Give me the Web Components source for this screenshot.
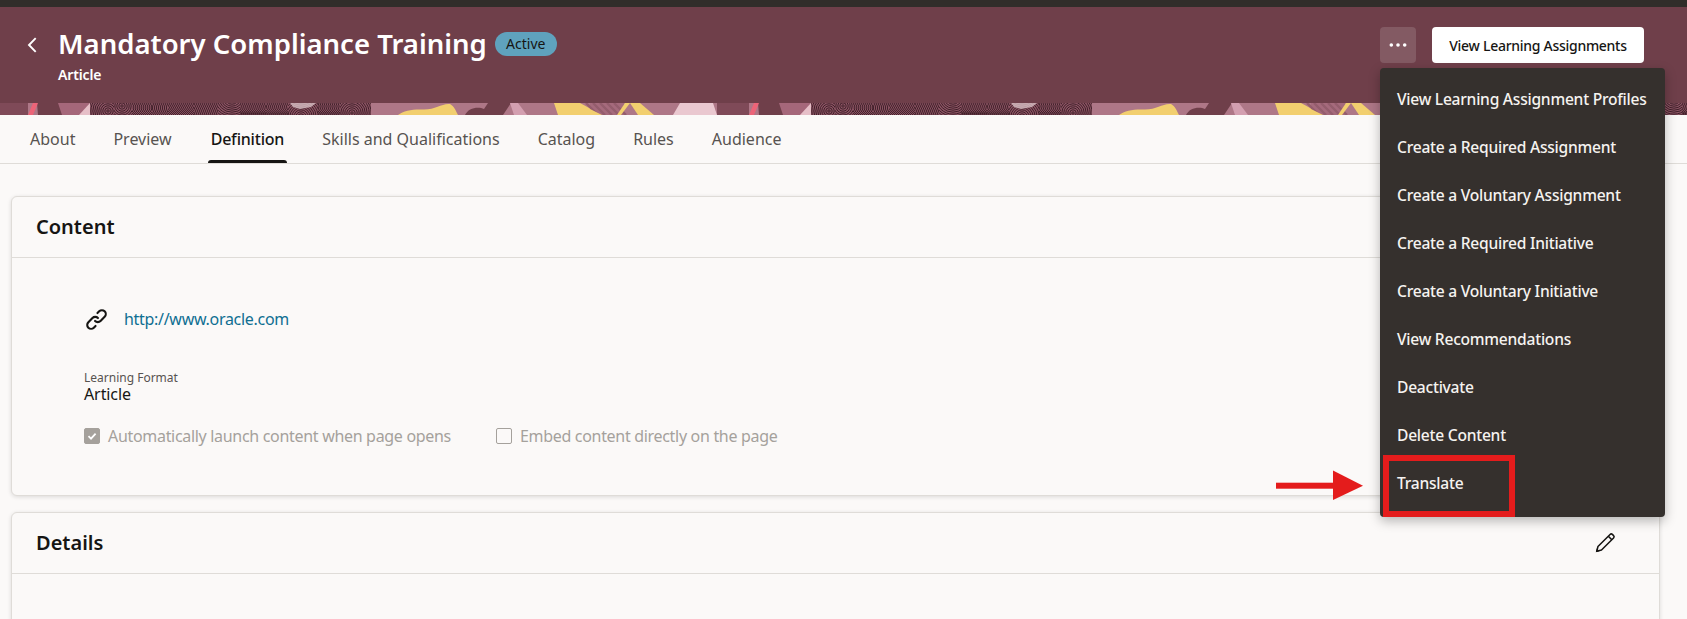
<!DOCTYPE html>
<html><head><meta charset="utf-8">
<style>
html,body{margin:0;padding:0;background:#fbf9f8;height:619px;overflow:hidden}
body{font-family:"Noto Sans","Open Sans",sans-serif;color:#161513;position:relative}
</style></head><body>
<app-page></app-page>
<script>
function def(name, html){
  customElements.define(name, class extends HTMLElement{
    constructor(){super();const r=this.attachShadow({mode:'open'});r.innerHTML=html;}
  });
}
const FF='"Noto Sans","Open Sans",sans-serif';

/* fingerprint texture: patches of curved ridges, each clipped by a nested svg */
function whorl(cx,cy,max){
  let s='';
  for(let r=1.2;r<max;r+=2)s+=`<circle cx="${cx}" cy="${cy}" r="${r.toFixed(1)}"/>`;
  return s;
}
function ridges(w,lean,bend){
  let d='';
  for(let x=-14;x<w+14;x+=2){
    d+=`M${x.toFixed(1)} 0Q${(x+bend).toFixed(1)} 6 ${(x+lean).toFixed(1)} 12`;
  }
  return `<path d="${d}"/>`;
}
function fingerprint(){
  const patches=[
    [90,24,'w',108,8,26],[114,18,'w',122,3,20],[132,20,'r',-3,5],[152,16,'r',2,-4],
    [168,26,'r',-9,-2],[194,24,'r',5,3],[218,22,'w',232,-6,30],[240,26,'r',-7,5],
    [266,22,'r',6,-5],[288,30,'w',301,14,24],[318,22,'r',-6,4],[340,31,'w',352,10,30]
  ];
  let s='';
  for(const p of patches){
    const inner=p[2]==='w'?whorl(p[3]-p[0],p[4],p[5]):ridges(p[1],p[3],p[4]);
    s+=`<svg x="${p[0]}" y="0" width="${p[1]}" height="12" viewBox="0 0 ${p[1]} 12"><g fill="none" stroke="#3f2029" stroke-width="1">${inner}</g></svg>`;
  }
  return s;
}
function stripes(x0,x1){
  let d='';
  for(let x=x0;x<x1;x+=7)d+=`M${x} 0L${x+12} 12`;
  return `<path d="${d}" stroke="#945d6d" stroke-width="2.4" fill="none"/>`;
}
function period(ox){
  return `<g transform="translate(${ox} 0)">
  <rect x="-4" width="725" height="12" fill="#ae7787"/>
  <rect x="-4" width="32" height="12" fill="#7f4a58"/>
  <path d="M37 0H62V12H38Z" fill="#6f3f4a"/>
  <path d="M58 0H92L80 12H62Z" fill="#a5677a"/>
  <path d="M28 12L33 0H38L33 12Z" fill="#ec6478"/>
  <path d="M79 12L90 0H96V12Z" fill="#e6bfc8"/>
  <rect x="90" width="281" height="12" fill="#8d5464"/>
  ${fingerprint()}
  <path d="M290 0H316L311 4L300 6L293 4Z" fill="#d9c0c6" opacity=".8"/>
  <path d="M398 12C404 7 414 6 424 6.5C436 6.5 442 0 450 1C454 3 456 8 458 12Z" fill="#f2cf6f"/>
  <path d="M465 12C468 5 478 3 484 6L488 0H511L503 12Z" fill="#6f3f4a"/>
  <path d="M510 0H518L527 12H514Z" fill="#d39fb0"/>
  <path d="M554 0H580L602 12H558Z" fill="#f2cf6f"/>
  <rect x="590" width="34" height="12" fill="#a56a7c"/>
  ${stripes(586,618)}
  <path d="M602 12L590 6V12Z" fill="#f2cf6f"/>
  <path d="M617 12L625 0H630L621 12Z" fill="#f2cf6f"/>
  <path d="M630 0H640L654 12H638Z" fill="#f2cf6f"/>
  <path d="M673 12L680 0H713L717 12Z" fill="#eac8d0"/>
  </g>`;
}
const strip=`<svg xmlns="http://www.w3.org/2000/svg" width="1687" height="12" viewBox="0 0 1687 12" style="display:block">${period(0)}${period(721)}${period(1442)}</svg>`;

def('page-banner',`<style>
:host{display:block;background:#6f3f4a;position:relative}
.top{display:flex;align-items:flex-start;justify-content:space-between;height:96px;box-sizing:border-box;padding:22px 43px 0 27px}
.left{display:flex;align-items:flex-start}
.back{width:10px;height:16px;margin:8px 21px 0 0;flex:none}
.t{display:flex;align-items:center;gap:8px;height:30px}
h1{margin:0;font:600 27.5px/36px ${FF};color:#fff;white-space:nowrap}
.sub{font:600 14px/18px ${FF};color:#fff;margin-top:7px;letter-spacing:-.15px}
.actions{display:flex;gap:16px;margin-top:-2px}
</style>
<div class="top"><div class="left">
<svg class="back" viewBox="0 0 10 16"><path d="M8.7 1.2L2 8l6.7 6.8" fill="none" stroke="#fff" stroke-width="1.9"/></svg>
<div><div class="t"><h1>Mandatory Compliance Training</h1><slot name="badge"></slot></div><div class="sub">Article</div></div>
</div><div class="actions"><slot name="actions"></slot></div></div>
${strip}`);

def('status-badge',`<style>:host{display:inline-flex;align-items:center;justify-content:center;height:24px;width:62px;border-radius:12px;background:#5fa2bd;color:#161513;font:400 14px/24px ${FF}}</style><slot></slot>`);

def('icon-button',`<style>:host{display:flex;width:36px;height:36px;border-radius:4px;background:rgba(255,255,255,.14);align-items:center;justify-content:center}</style>
<svg width="18" height="4" viewBox="0 0 18 4"><circle cx="2.3" cy="2" r="1.8" fill="#fff"/><circle cx="9" cy="2" r="1.8" fill="#fff"/><circle cx="15.7" cy="2" r="1.8" fill="#fff"/></svg>`);

def('primary-button',`<style>:host{display:flex;width:212px;height:36px;border-radius:4px;background:#fff;color:#161513;align-items:center;justify-content:center;font:500 14px ${FF};letter-spacing:-.28px;white-space:nowrap}</style><slot></slot>`);

def('tab-bar',`<style>:host{display:flex;height:49px;box-sizing:border-box;border-bottom:1px solid #dfdcd8;padding-left:30px;gap:38px;background:#fbf9f8}</style><slot></slot>`);

def('tab-item',`<style>
:host{display:block;position:relative;font:400 16px/32px ${FF};color:#575350;height:48px;padding-top:8px;box-sizing:border-box;white-space:nowrap}
:host([selected]){color:#161513;font-weight:500;letter-spacing:-.2px;margin-left:1px}
:host([selected])::after{content:"";position:absolute;left:-3px;right:-3px;bottom:0;height:3px;background:#161513;border-radius:3px 3px 0 0}
</style><slot></slot>`);

def('content-card',`<style>
:host{display:block;background:#fbf9f8;border:1px solid #dfdcd8;border-radius:6px;box-shadow:0 1px 4px rgba(0,0,0,.13);margin:0 27px 0 11px}
.h{display:flex;align-items:center;justify-content:space-between;height:61px;padding:0 43px 0 24px;border-bottom:1px solid #dfdcd8;box-sizing:border-box}
h2{margin:0;font:600 20px/28px ${FF};color:#161513}
</style><div class="h"><h2><slot name="title"></slot></h2><slot name="action"></slot></div><slot></slot>`);

def('content-body',`<style>
:host{display:block;height:237px;box-sizing:border-box;padding:48px 0 0 72px}
.link{display:flex;align-items:center;gap:16px;height:26px;font:400 16px/26px ${FF};letter-spacing:-.3px}
.link svg{flex:none;margin-left:1px}
.lab{font:400 12px/16px ${FF};color:#575350;margin-top:38px;margin-bottom:-2px}
.val{font:400 16px/20px ${FF};color:#161513;letter-spacing:-.1px}
.checks{display:flex;margin-top:22px;gap:45px}
</style>
<div class="link"><svg width="23" height="23" viewBox="0 0 24 24" fill="none" stroke="#161513" stroke-width="2.2" stroke-linecap="round" stroke-linejoin="round"><path d="M10.5 13.5a4 4 0 0 0 5.7 0l4.3-4.3a4 4 0 0 0-5.7-5.7l-1.8 1.8"/><path d="M13.5 10.5a4 4 0 0 0-5.7 0l-4.3 4.3a4 4 0 0 0 5.7 5.7l1.8-1.8"/></svg><slot name="link"></slot></div>
<div class="lab">Learning Format</div>
<div class="val">Article</div>
<div class="checks"><slot></slot></div>`);

def('read-check',`<style>
:host{display:flex;align-items:center;gap:8px;font:400 16px/20px ${FF};letter-spacing:-.31px;color:#a5a19c;white-space:nowrap}
.b{width:16px;height:16px;border-radius:2px;box-sizing:border-box;display:flex;align-items:center;justify-content:center;border:1px solid #a5a19c}
:host([checked]) .b{background:#a5a19c}
svg{display:none}
:host([checked]) svg{display:block}
</style><span class="b"><svg width="12" height="12" viewBox="0 0 12 12"><path d="M2.5 6.2L5 8.6 9.6 3.6" fill="none" stroke="#fff" stroke-width="1.8"/></svg></span><slot></slot>`);

def('action-menu',`<style>
:host{display:block;position:absolute;left:1380px;top:68px;width:285px;height:449px;box-sizing:border-box;padding:7px 0 0 17px;background:#35302d;border-radius:4px;box-shadow:0 4px 12px rgba(0,0,0,.28);z-index:5}
</style><slot></slot>`);

def('menu-item',`<style>:host{display:flex;align-items:center;height:48px;color:#f5f3f0;font:500 15.6px/20px ${FF};letter-spacing:-.25px;white-space:nowrap}</style><slot></slot>`);

def('callout-arrow',`<style>:host{display:block;position:absolute;left:1276px;top:455px;width:240px;height:62px;z-index:6}
svg{display:block}</style>
<svg width="240" height="62" viewBox="0 0 240 62"><rect x="0" y="27.7" width="58" height="6" fill="#e41c1c"/><path d="M57 15.5L87 30.7 57 45Z" fill="#e41c1c"/><rect x="110" y="3" width="126" height="56" fill="none" stroke="#e41c1c" stroke-width="6"/></svg>`);

def('app-page',`<style>
:host{display:block;position:relative;height:619px;overflow:hidden}
.bar{height:7px;background:#312d2a}
.main{display:flex;flex-direction:column;gap:16px;padding-top:32px}
a{color:#0f6f92;text-decoration:none}
.x{height:60px}
svg.p{display:block}
</style>
<div class="bar"></div>
<page-banner>
  <status-badge slot="badge">Active</status-badge>
  <icon-button slot="actions"></icon-button>
  <primary-button slot="actions">View Learning Assignments</primary-button>
</page-banner>
<tab-bar>
  <tab-item>About</tab-item><tab-item>Preview</tab-item><tab-item selected>Definition</tab-item><tab-item>Skills and Qualifications</tab-item><tab-item>Catalog</tab-item><tab-item>Rules</tab-item><tab-item>Audience</tab-item>
</tab-bar>
<div class="main">
  <content-card><span slot="title">Content</span>
    <content-body><a slot="link">http://www.oracle.com</a>
      <read-check checked>Automatically launch content when page opens</read-check>
      <read-check>Embed content directly on the page</read-check>
    </content-body>
  </content-card>
  <content-card><span slot="title">Details</span>
    <svg slot="action" class="p" width="22" height="22" viewBox="0 0 20 20" fill="none" stroke="#161513" stroke-width="1.4" stroke-linejoin="round"><path d="M2.5 17.5L3.6 13.2 14.6 2.2a1.5 1.5 0 0 1 2.1 0l1.1 1.1a1.5 1.5 0 0 1 0 2.1L6.8 16.4Z"/><path d="M13 3.8l3.2 3.2"/><path d="M1.6 18.4L2.6 15 5 17.4Z" fill="#161513" stroke="none"/></svg>
    <div class="x"></div>
  </content-card>
</div>
<action-menu>
  <menu-item>View Learning Assignment Profiles</menu-item>
  <menu-item>Create a Required Assignment</menu-item>
  <menu-item>Create a Voluntary Assignment</menu-item>
  <menu-item>Create a Required Initiative</menu-item>
  <menu-item>Create a Voluntary Initiative</menu-item>
  <menu-item>View Recommendations</menu-item>
  <menu-item>Deactivate</menu-item>
  <menu-item>Delete Content</menu-item>
  <menu-item>Translate</menu-item>
</action-menu>
<callout-arrow></callout-arrow>`);
</script></body></html>
